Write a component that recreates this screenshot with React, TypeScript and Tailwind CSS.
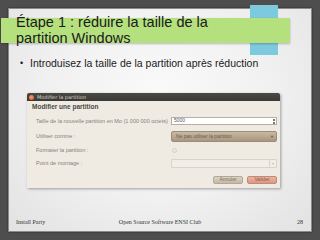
import React from "react";

export default function App() {
  return (
    <div className="relative w-[320px] h-[240px] overflow-hidden bg-[#4e4e4e] p-[8px]" style={{ fontFamily: '"Liberation Sans", Arial, sans-serif' }}>
      <div className="relative h-[224px] w-[304px] border border-[#8a8a8a] bg-[radial-gradient(ellipse_at_50%_40%,#fafafa_0%,#f0f0f0_55%,#e2e2e2_100%)] shadow-[0_0_2px_rgba(0,0,0,0.5)] flex flex-col">
        {/* decorative shapes */}
        <div className="absolute left-[241px] top-[-4px] w-[28px] h-[50px] bg-[#7dc9dd]" />
        <div className="absolute left-[-8px] top-[9px] w-[289px] h-[25px] bg-[#b4e07e] shadow-[0_1px_2px_rgba(0,0,0,0.25)]" />

        <div className="relative pl-[7px] pt-[5px] text-[14.5px] leading-[16px] text-[#1a1a1a]">
          <div>Étape 1 : réduire la taille de la</div>
          <div>partition Windows</div>
        </div>

        <div className="relative mt-[11px] flex items-center pl-[11px] text-[10.5px] leading-[12px] text-[#1a1a1a]">
          <span className="w-[10px] text-[9px]">•</span>
          <span>Introduisez la taille de la partition après réduction</span>
        </div>

        {/* dialog */}
        <div className="ml-[18px] mt-[24px] w-[253px] flex flex-col bg-[#efebe3] shadow-[1px_1px_3px_rgba(0,0,0,0.35)] rounded-t-[2px]" style={{ fontFamily: '"DejaVu Sans", "Liberation Sans", sans-serif' }}>
          <div className="h-[8px] flex items-center gap-[3px] pl-[2px] bg-[linear-gradient(#4a4944,#3a3935)] rounded-t-[2px]">
            <div className="w-[5px] h-[5px] rounded-full bg-[radial-gradient(circle_at_40%_40%,#f59a6e,#d9561f)]" />
            <span className="text-[5px] leading-[5px] text-[#dcd7cc]">Modifier la partition</span>
          </div>
          <div className="h-[12px] flex items-center pl-[5px] text-[6.5px] font-bold text-[#4a4844]" style={{ fontFamily: '"Liberation Sans", sans-serif' }}>
            Modifier une partition
          </div>
          <div className="flex flex-col pl-[9px] pr-[3px] text-[5.5px] text-[#85807a]" style={{ fontFamily: '"Liberation Sans", sans-serif' }}>
            <div className="mt-[4px] h-[8px] flex items-center">
              <span className="w-[135px]">Taille de la nouvelle partition en Mo (1 000 000 octets)</span>
              <div className="flex-1 h-[8px] flex items-center justify-between bg-white border border-[#b5afa5] pl-[2px] pr-[1px] text-[5px] text-[#555]">
                <span>5000</span>
                <span className="flex flex-col gap-[1px]">
                  <span className="w-[2px] h-[2px] bg-[#777]" />
                  <span className="w-[2px] h-[2px] bg-[#777]" />
                </span>
              </div>
            </div>
            <div className="mt-[6px] h-[11px] flex items-center">
              <span className="w-[135px]">Utiliser comme :</span>
              <div className="flex-1 h-[11px] flex items-center justify-between rounded-[2px] border border-[#9a8d79] bg-[linear-gradient(#c8b9a2,#a8977f)] pl-[4px] pr-[2px] text-[5px] text-[#6a5e50]">
                <span>Ne pas utiliser la partition</span>
                <span className="text-[4px]">▼</span>
              </div>
            </div>
            <div className="mt-[4px] h-[8px] flex items-center">
              <span className="w-[135px]">Formater la partition :</span>
              <div className="ml-[1px] w-[5px] h-[5px] rounded-full border border-[#d6d1c7] bg-[#ebe7df]" />
            </div>
            <div className="mt-[5px] h-[9px] flex items-center">
              <span className="w-[135px]">Point de montage :</span>
              <div className="flex-1 h-[9px] flex items-center justify-end rounded-[1px] border border-[#d9d4ca] bg-[#f1eee8]">
                <span className="w-[7px] h-full border-l border-[#d9d4ca] text-[4px] text-[#bbb] flex items-center justify-center">▾</span>
              </div>
            </div>
            <div className="mt-[8px] mb-[4px] h-[8px] flex items-center justify-end gap-[4px]">
              <div className="w-[30px] h-[8px] rounded-[2px] border border-[#b2a897] bg-[linear-gradient(#ddd3c4,#c4b8a5)] text-[5px] text-[#7a7062] flex items-center justify-center">Annuler</div>
              <div className="w-[30px] h-[8px] rounded-[2px] border border-[#c48a76] bg-[linear-gradient(#eab4a2,#d69a84)] text-[5px] text-[#8a5a4a] flex items-center justify-center">Valider</div>
            </div>
          </div>
        </div>

        <div className="mt-auto mb-[5px] flex items-center justify-between px-[7px] text-[6px] leading-[8px] text-[#333]" style={{ fontFamily: '"Liberation Serif", "Times New Roman", serif' }}>
          <span className="w-[60px]">Install Party</span>
          <span>Open Source Software ENSI Club</span>
          <span className="w-[60px] text-right pr-[1px]">28</span>
        </div>
      </div>
    </div>
  );
}
